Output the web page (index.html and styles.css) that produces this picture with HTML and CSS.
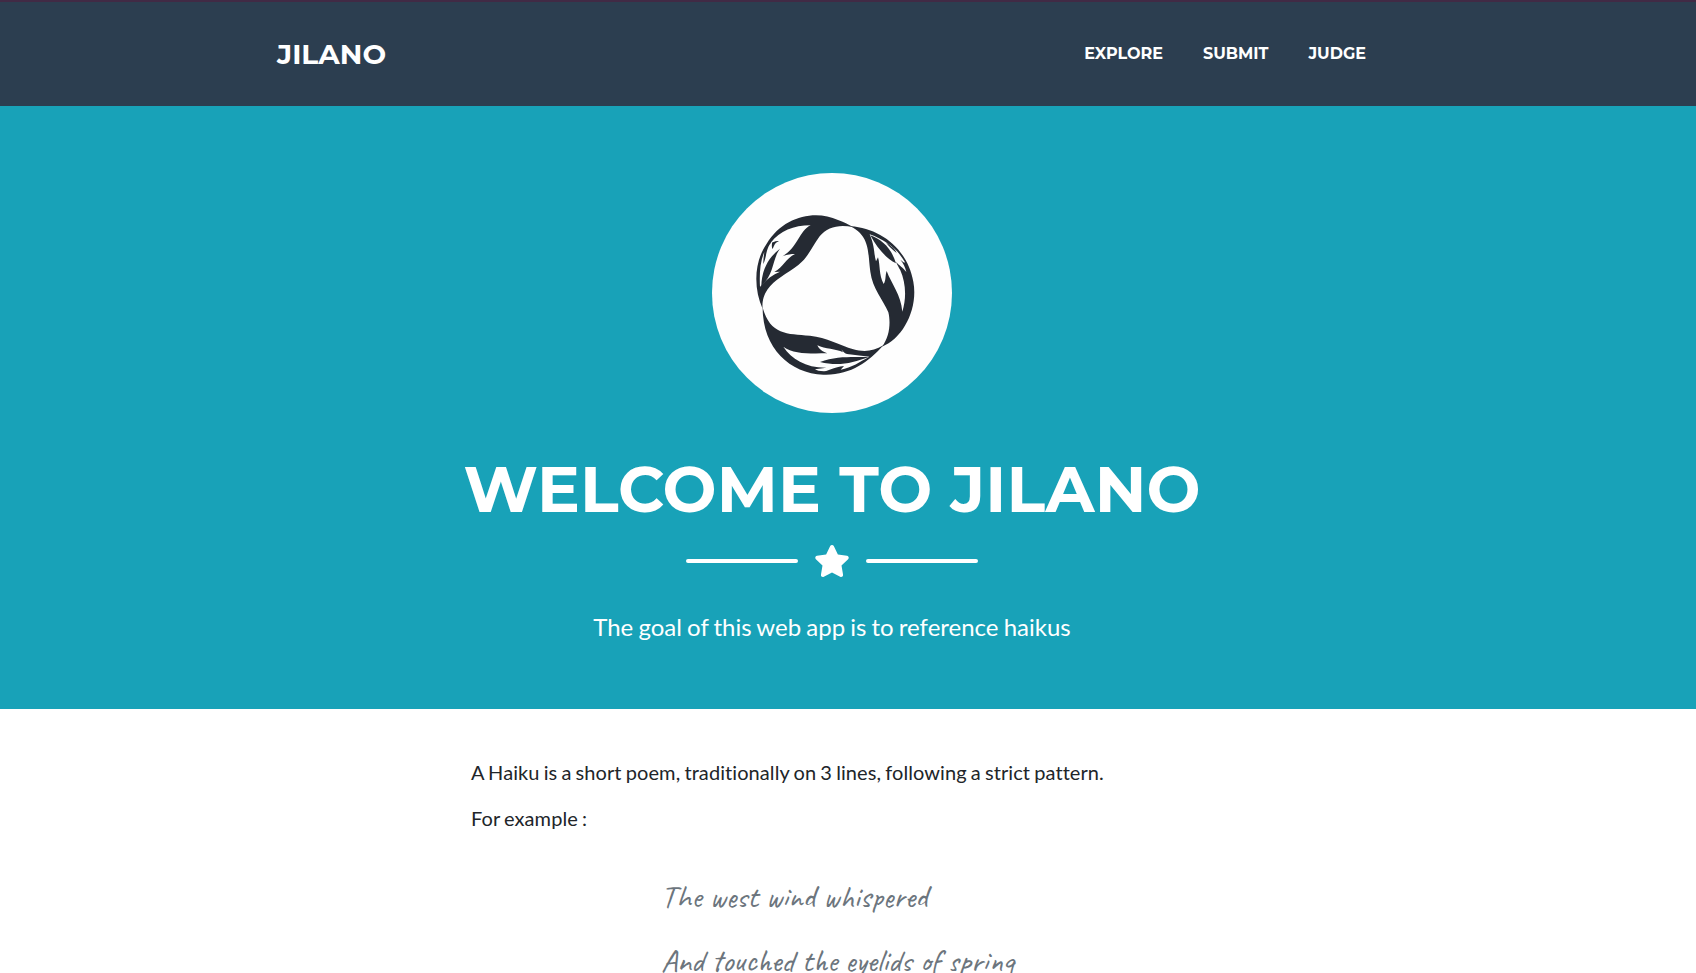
FILE: index.html
```html
<!DOCTYPE html>
<html lang="en">
<head>
<meta charset="utf-8">
<title>Jilano</title>
<link rel="stylesheet" href="styles.css">
</head>
<body>
<nav class="navbar">
  <div class="container navbar-inner">
    <a class="brand">JILANO</a>
    <div class="nav-links">
      <a class="nav-link">EXPLORE</a>
      <a class="nav-link">SUBMIT</a>
      <a class="nav-link">JUDGE</a>
    </div>
  </div>
</nav>
<header class="masthead">
  <svg class="avatar" viewBox="36 24 720 720">
    <circle cx="396" cy="384" r="360" fill="#fefefe"/>
    <g fill="#252a33">
      <path d="M188 432C160 370 162 290 200 236C250 154 345 133 414 165C430 171 446 178 460 187C420 177 382 185 359 214C335 247 326 275 295 300C260 326 222 345 203 373C188 395 186 415 188 432Z"/>
      <path d="M452 184C540 190 622 250 640 350C655 430 610 520 546 545C570 515 572 470 565 442C550 405 517 370 511 320C503 265 512 215 452 184Z"/>
      <path d="M188 428C188 550 270 625 370 629C450 632 505 592 550 541C520 560 490 561 460 553C420 541 380 517 330 512C260 506 212 510 188 428Z"/>
    </g>
    <g fill="#fefefe">
      <path d="M332 181C298 197 292 250 247 274C260 269 272 267 285 267C258 280 250 306 223 321L240 320C215 331 196 345 180 366C178 328 180 290 193 261C191 275 190 285 190 297C201 275 196 250 217 229C215 240 215 246 217 252C224 243 221 235 237 228C226 226 218 233 212 233C240 198 280 181 332 181Z"/>
      <path d="M509 208C525 245 521 265 528 289L534 277C541 300 536 330 551 357C559 344 555 332 560 318C575 358 603 389 607 440C621 395 616 350 601 316C597 308 592 300 588 290C598 303 609 306 619 321C616 307 609 293 601 284C610 291 614 294 615 292C590 248 555 225 509 208Z"/>
      <path d="M250 545C280 567 325 566 382 565C366 560 358 553 352 541C375 553 408 551 429 562L424 553C431 564 439 568 447 568L508 575C480 590 455 608 422 614L432 603C400 606 391 617 372 619C359 619 350 617 345 613L380 608C318 609 275 582 250 545Z"/>
    </g>
    <g fill="#252a33">
      <path d="M184 362C185 322 201 280 240 251C217 280 223 329 184 362Z"/>
      <path d="M511 211C546 224 574 249 588 295C556 278 532 250 511 211ZM557 231C577 247 585 251 590 264Q567 246 557 231Z"/>
      <path d="M360 591C411 572 459 577 506 576C458 594 416 605 360 591Z"/>
    </g>
  </svg>
  <h1 class="title">WELCOME TO JILANO</h1>
  <div class="divider">
    <span class="divider-line"></span>
    <svg class="star" viewBox="0 0 576 512"><path fill="#fff" d="M259.3 17.8L194 150.2 47.9 171.500c-26.200 3.800-36.700 36.100-17.700 54.600l105.700 103-25 145.500c-4.500 26.300 23.200 46 46.400 33.700L288 439.600l130.700 68.700c23.200 12.200 50.900-7.400 46.400-33.700l-25-145.500 105.700-103c19-18.500 8.500-50.800-17.700-54.600L382 150.200 316.700 17.800c-11.700-23.600-45.600-23.900-57.400 0z"/></svg>
    <span class="divider-line"></span>
  </div>
  <p class="subheading">The goal of this web app is to reference haikus</p>
</header>
<main class="content">
  <p class="lead">A Haiku is a short poem, traditionally on 3 lines, following a strict pattern.</p>
  <p class="lead">For example :</p>
  <div class="haiku">
    <p class="verse">The west wind whispered</p>
    <p class="verse">And touched the eyelids of spring</p>
  </div>
</main>
</body>
</html>
```
FILE: styles.css
```css
* { box-sizing: border-box; }
html { overflow: hidden; }
body {
  margin: 0;
  height: 973px;
  overflow: hidden;
  background: #fff;
  color: #212529;
  font-family: Lato, sans-serif;
}
p, h1 { margin: 0; }
.navbar {
  height: 106px;
  padding-right: 32px;
  background: #2c3e50;
  border-top: 2px solid #412a45;
  color: #fff;
  font-family: Montserrat, Inter, sans-serif;
  font-weight: 700;
}
.container { width: 1140px; margin: 0 auto; padding: 0 15px; }
.navbar-inner {
  display: flex;
  align-items: center;
  justify-content: space-between;
  height: 104px;
}
.brand { font-size: 28px; line-height: 40px; }
.nav-links { display: flex; gap: 40px; padding-right: 21px; }
.nav-link { font-size: 16px; line-height: 24px; white-space: nowrap; }
.masthead {
  display: flex;
  flex-direction: column;
  align-items: center;
  height: 603px;
  padding: 67px 32px 0 0;
  background: #18a2b8;
  color: #fff;
}
.avatar { width: 240px; height: 240px; }
.title {
  margin-top: 38px;
  font: 700 64px/76px Montserrat, Inter, sans-serif;
  letter-spacing: 0.12px;
  white-space: nowrap;
}
.divider {
  display: flex;
  align-items: center;
  gap: 16px;
  height: 36px;
  margin-top: 16px;
}
.divider-line { width: 112px; height: 4px; border-radius: 2px; background: #fff; }
.star { width: 36px; height: 32px; }
.subheading {
  margin-top: 30px;
  font-size: 24px;
  line-height: 36px;
  font-variant-ligatures: none;
  word-spacing: -1px;
}
.content { width: 752px; margin-left: 456px; padding: 48px 0 0 15px; }
.lead {
  margin-bottom: 16px;
  font-size: 20px;
  line-height: 30px;
  letter-spacing: 0.08px;
  word-spacing: -1.05px;
  white-space: nowrap;
}
.haiku { padding: 28px 0 0 190px; color: #6c757d; }
.verse {
  font-family: Caveat, Lato, cursive;
  font-size: 32px;
  line-height: 40px;
  margin-bottom: 24px;
  white-space: nowrap;
}
```
